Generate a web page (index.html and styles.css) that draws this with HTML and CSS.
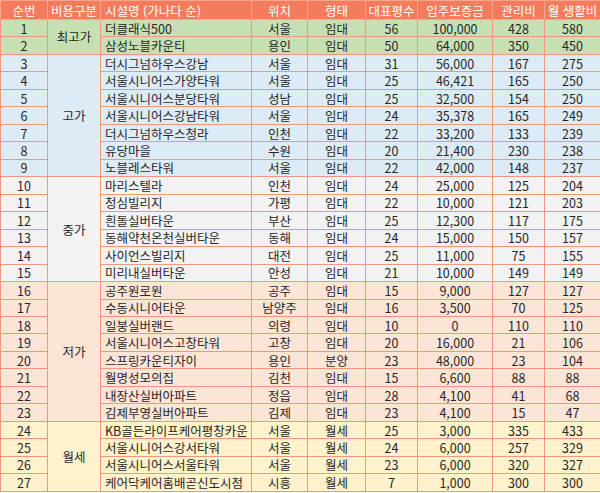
FILE: index.html
```html
<!DOCTYPE html>
<html lang="ko">
<head>
<meta charset="utf-8">
<link rel="stylesheet" href="styles.css">
</head>
<body>
<table class="sheet">
<colgroup>
<col class="c-no"><col class="c-grp"><col class="c-name"><col class="c-loc"><col class="c-type"><col class="c-size"><col class="c-dep"><col class="c-fee"><col class="c-live">
</colgroup>
<thead>
<tr><th>순번</th><th>비용구분</th><th class="name">시설명 (가나다 순)</th><th>위치</th><th>형태</th><th>대표평수</th><th>입주보증금</th><th>관리비</th><th>월 생활비</th></tr>
</thead>
<tbody class="g-top">
<tr><td>1</td><td rowspan="2" class="grp grp-top">최고가</td><td class="name">더클래식500</td><td>서울</td><td>임대</td><td>56</td><td>100,000</td><td>428</td><td>580</td></tr>
<tr><td>2</td><td class="name">삼성노블카운티</td><td>용인</td><td>임대</td><td>50</td><td>64,000</td><td>350</td><td>450</td></tr>
</tbody>
<tbody class="g-high">
<tr><td>3</td><td rowspan="7" class="grp grp-high">고가</td><td class="name">더시그넘하우스강남</td><td>서울</td><td>임대</td><td>31</td><td>56,000</td><td>167</td><td>275</td></tr>
<tr><td>4</td><td class="name">서울시니어스가양타워</td><td>서울</td><td>임대</td><td>25</td><td>46,421</td><td>165</td><td>250</td></tr>
<tr><td>5</td><td class="name">서울시니어스분당타워</td><td>성남</td><td>임대</td><td>25</td><td>32,500</td><td>154</td><td>250</td></tr>
<tr><td>6</td><td class="name">서울시니어스강남타워</td><td>서울</td><td>임대</td><td>24</td><td>35,378</td><td>165</td><td>249</td></tr>
<tr><td>7</td><td class="name">더시그넘하우스청라</td><td>인천</td><td>임대</td><td>22</td><td>33,200</td><td>133</td><td>239</td></tr>
<tr><td>8</td><td class="name">유당마을</td><td>수원</td><td>임대</td><td>20</td><td>21,400</td><td>230</td><td>238</td></tr>
<tr><td>9</td><td class="name">노블레스타워</td><td>서울</td><td>임대</td><td>22</td><td>42,000</td><td>148</td><td>237</td></tr>
</tbody>
<tbody class="g-mid">
<tr><td>10</td><td rowspan="6" class="grp grp-mid">중가</td><td class="name">마리스텔라</td><td>인천</td><td>임대</td><td>24</td><td>25,000</td><td>125</td><td>204</td></tr>
<tr><td>11</td><td class="name">청심빌리지</td><td>가평</td><td>임대</td><td>22</td><td>10,000</td><td>121</td><td>203</td></tr>
<tr><td>12</td><td class="name">흰돌실버타운</td><td>부산</td><td>임대</td><td>25</td><td>12,300</td><td>117</td><td>175</td></tr>
<tr><td>13</td><td class="name">동해약천온천실버타운</td><td>동해</td><td>임대</td><td>24</td><td>15,000</td><td>150</td><td>157</td></tr>
<tr><td>14</td><td class="name">사이언스빌리지</td><td>대전</td><td>임대</td><td>25</td><td>11,000</td><td>75</td><td>155</td></tr>
<tr><td>15</td><td class="name">미리내실버타운</td><td>안성</td><td>임대</td><td>21</td><td>10,000</td><td>149</td><td>149</td></tr>
</tbody>
<tbody class="g-low">
<tr><td>16</td><td rowspan="8" class="grp grp-low">저가</td><td class="name">공주원로원</td><td>공주</td><td>임대</td><td>15</td><td>9,000</td><td>127</td><td>127</td></tr>
<tr><td>17</td><td class="name">수동시니어타운</td><td>남양주</td><td>임대</td><td>16</td><td>3,500</td><td>70</td><td>125</td></tr>
<tr><td>18</td><td class="name">일붕실버랜드</td><td>의령</td><td>임대</td><td>10</td><td>0</td><td>110</td><td>110</td></tr>
<tr><td>19</td><td class="name">서울시니어스고창타워</td><td>고창</td><td>임대</td><td>20</td><td>16,000</td><td>21</td><td>106</td></tr>
<tr><td>20</td><td class="name">스프링카운티자이</td><td>용인</td><td>분양</td><td>23</td><td>48,000</td><td>23</td><td>104</td></tr>
<tr><td>21</td><td class="name">월명성모의집</td><td>김천</td><td>임대</td><td>15</td><td>6,600</td><td>88</td><td>88</td></tr>
<tr><td>22</td><td class="name">내장산실버아파트</td><td>정읍</td><td>임대</td><td>28</td><td>4,100</td><td>41</td><td>68</td></tr>
<tr><td>23</td><td class="name">김제부영실버아파트</td><td>김제</td><td>임대</td><td>23</td><td>4,100</td><td>15</td><td>47</td></tr>
</tbody>
<tbody class="g-rent">
<tr><td>24</td><td rowspan="4" class="grp grp-rent">월세</td><td class="name">KB골든라이프케어평창카운</td><td>서울</td><td>월세</td><td>25</td><td>3,000</td><td>335</td><td>433</td></tr>
<tr><td>25</td><td class="name">서울시니어스강서타워</td><td>서울</td><td>월세</td><td>24</td><td>6,000</td><td>257</td><td>329</td></tr>
<tr><td>26</td><td class="name">서울시니어스서울타워</td><td>서울</td><td>월세</td><td>23</td><td>6,000</td><td>320</td><td>327</td></tr>
<tr><td>27</td><td class="name">케어닥케어홈배곧신도시점</td><td>시흥</td><td>월세</td><td>7</td><td>1,000</td><td>300</td><td>300</td></tr>
</tbody>
</table>
</body>
</html>
```

FILE: styles.css
```css
html, body {
  margin: 0;
  padding: 0;
  background: #ffffff;
}

.sheet {
  border-collapse: collapse;
  table-layout: fixed;
  width: 600px;
  font-family: "Noto Sans CJK KR", "Noto Sans", sans-serif;
  font-size: 12.5px;
  color: #262626;
}

.c-no { width: 47px; }
.c-grp { width: 53px; }
.c-name { width: 151px; }
.c-loc { width: 56px; }
.c-type { width: 58px; }
.c-size { width: 52px; }
.c-dep { width: 75px; }
.c-fee { width: 52px; }
.c-live { width: 56px; }

.sheet th,
.sheet td {
  border: 1px solid #f3977b;
  padding: 0;
  text-align: center;
  vertical-align: middle;
  white-space: nowrap;
  overflow: hidden;
  line-height: 15px;
}

.sheet th {
  background: #f47b5c;
  color: #ffffff;
  font-weight: normal;
  height: 18px;
  font-size: 12.5px;
  border-color: #f8a58c;
}

.sheet td {
  height: 16.47px;
}

.sheet .name {
  text-align: left;
  padding-left: 4px;
}

.g-top td { background: #c6e0b4; }
.g-high td { background: #ddebf7; }
.g-mid td { background: #f2f2f2; }
.g-low td { background: #fce4d6; }
.g-rent td { background: #fff2cc; }

.grp-top { padding-bottom: 9px; }
.grp-high { padding-top: 38px; }
.grp-mid { padding-top: 32px; }
.grp-low { padding-top: 30px; }
.grp-rent { padding-top: 14px; }
```
